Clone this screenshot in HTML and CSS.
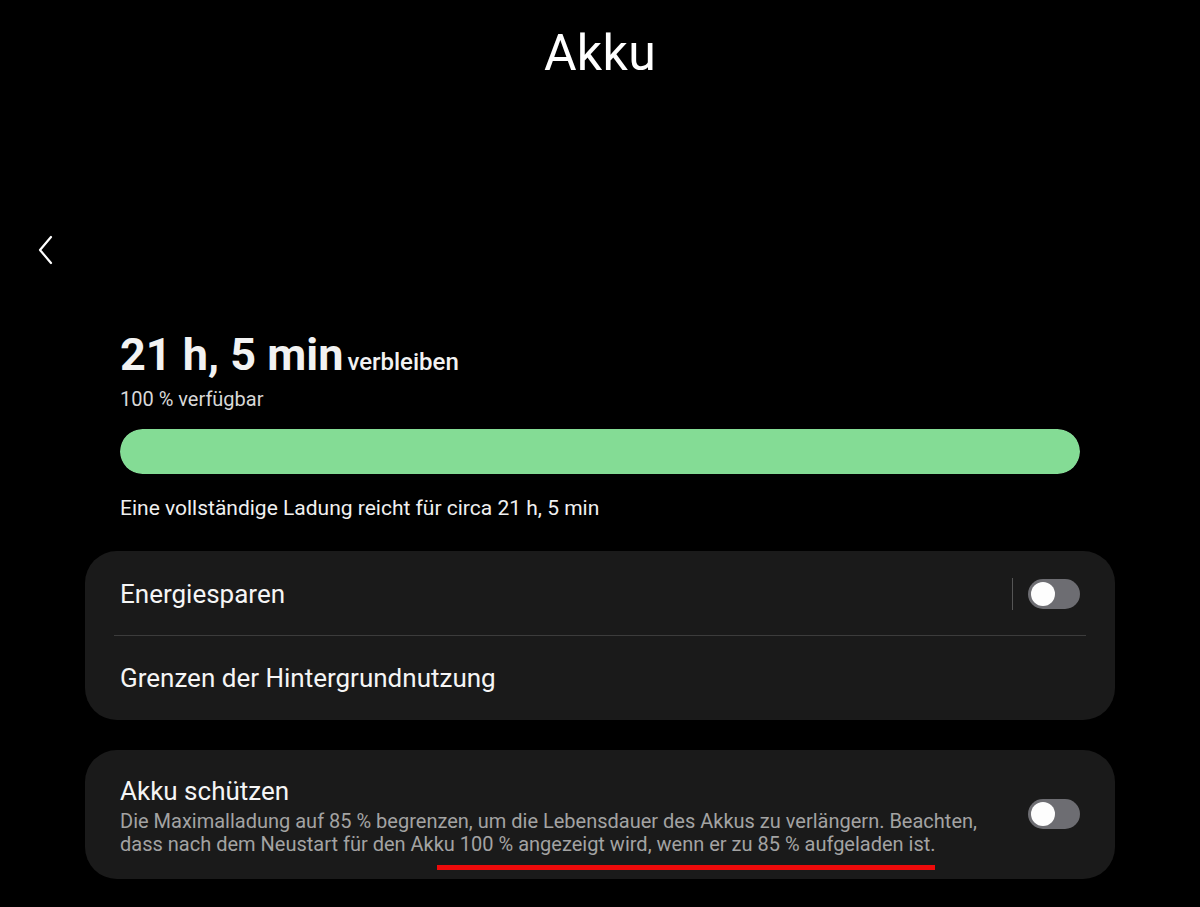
FILE: index.html
```html
<!DOCTYPE html>
<html lang="de">
<head>
    <meta charset="UTF-8">
    <meta name="viewport" content="width=device-width, initial-scale=1.0">
    <title>Akku</title>
    <link rel="stylesheet" href="styles.css">
</head>
<body>

    <!-- Large title -->
    <header class="title-bar">
        <h1>Akku</h1>
    </header>

    <!-- Back button -->
    <div class="nav-bar">
        <button class="back" aria-label="Zurück">
            <svg width="16" height="30" viewBox="0 0 16 30">
                <path d="M13 2 L2 15 L13 28" fill="none" stroke="#fff" stroke-width="2.2" stroke-linecap="round" stroke-linejoin="round"/>
            </svg>
        </button>
    </div>

    <!-- Remaining time -->
    <section class="summary">
        <div class="remaining"><span class="time">21 h, 5 min</span> <span class="suffix">verbleiben</span></div>
        <div class="available">100 % verfügbar</div>
        <div class="bar"><div class="fill" style="width: 100%"></div></div>
        <div class="estimate">Eine vollständige Ladung reicht für circa 21 h, 5 min</div>
    </section>

    <!-- Settings -->
    <div class="card">
        <div class="row">
            <span class="label">Energiesparen</span>
            <div class="controls">
                <span class="vdivider"></span>
                <span class="toggle"><span class="knob"></span></span>
            </div>
        </div>
        <div class="hdivider"></div>
        <div class="row">
            <span class="label">Grenzen der Hintergrundnutzung</span>
        </div>
    </div>

    <div class="card protect">
        <div class="text">
            <div class="label">Akku schützen</div>
            <div class="desc">Die Maximalladung auf 85 % begrenzen, um die Lebensdauer des Akkus zu verlängern. Beachten, dass nach dem Neustart für den Akku 100 % angezeigt wird, wenn er zu 85 % aufgeladen ist.</div>
        </div>
        <span class="toggle"><span class="knob"></span></span>
        <!-- red annotation line -->
        <span class="mark"></span>
    </div>

</body>
</html>
```

FILE: styles.css
```css
body {
    margin: 0;
    background: #000;
    color: #fff;
    font-family: Roboto, "Noto Sans", Arial, sans-serif;
}
.title-bar {
    height: 110px;
    text-align: center;
}
.title-bar h1 {
    margin: 0;
    padding-top: 21px;
    font-size: 50px;
    font-weight: 400;
    line-height: 64px;
    letter-spacing: 0.3px;
}
.nav-bar {
    height: 200px;
    display: flex;
    align-items: center;
    padding-left: 38px;
    padding-top: 80px;
    box-sizing: border-box;
}
.back {
    background: none;
    border: none;
    padding: 0;
    width: 16px;
    height: 30px;
    display: block;
}
.summary {
    padding: 19px 120px 0 120px;
}
.remaining {
    line-height: 52px;
    color: #f2f2f2;
}
.time {
    font-size: 45px;
    font-weight: 700;
}
.suffix {
    font-size: 24px;
    font-weight: 500;
}
.available {
    font-size: 20px;
    color: #d8d8d8;
    margin-top: -4px;
    line-height: 24px;
}
.bar {
    margin-top: 18px;
    height: 45px;
    border-radius: 23px;
    background: #333;
    overflow: hidden;
}
.fill {
    height: 100%;
    background: #84dc95;
    border-radius: 23px;
}
.estimate {
    margin-top: 21px;
    font-size: 21px;
    line-height: 26px;
    color: #f0f0f0;
}
.card {
    margin: 30px 85px 0 85px;
    background: #1a1a1a;
    border-radius: 32px;
    position: relative;
}
.row {
    height: 84px;
    display: flex;
    align-items: center;
    justify-content: space-between;
    padding: 0 35px;
}
.row:first-child {
    padding-top: 2px;
    box-sizing: border-box;
}
.label {
    font-size: 26px;
    color: #f5f5f5;
}
.controls {
    display: flex;
    align-items: center;
    gap: 15px;
}
.vdivider {
    width: 1px;
    height: 32px;
    background: #555;
}
.hdivider {
    height: 1px;
    background: #3c3c3c;
    margin: 0 29px;
}
.toggle {
    width: 52px;
    height: 30px;
    border-radius: 15px;
    background: #6d6d72;
    display: flex;
    align-items: center;
    padding-left: 3px;
    box-sizing: border-box;
    flex-shrink: 0;
}
.knob {
    width: 24px;
    height: 24px;
    border-radius: 50%;
    background: #fdfdfd;
}
.protect {
    margin-top: 30px;
    display: flex;
    align-items: center;
    justify-content: space-between;
    padding: 22px 35px 23px 35px;
}
.protect .text {
    width: 880px;
}
.protect .label {
    line-height: 38px;
}
.desc {
    font-size: 20px;
    line-height: 23px;
    color: #a3a3a3;
}
.mark {
    position: absolute;
    left: 352px;
    top: 115px;
    width: 498px;
    height: 5px;
    background: #ee0a0a;
}
```
